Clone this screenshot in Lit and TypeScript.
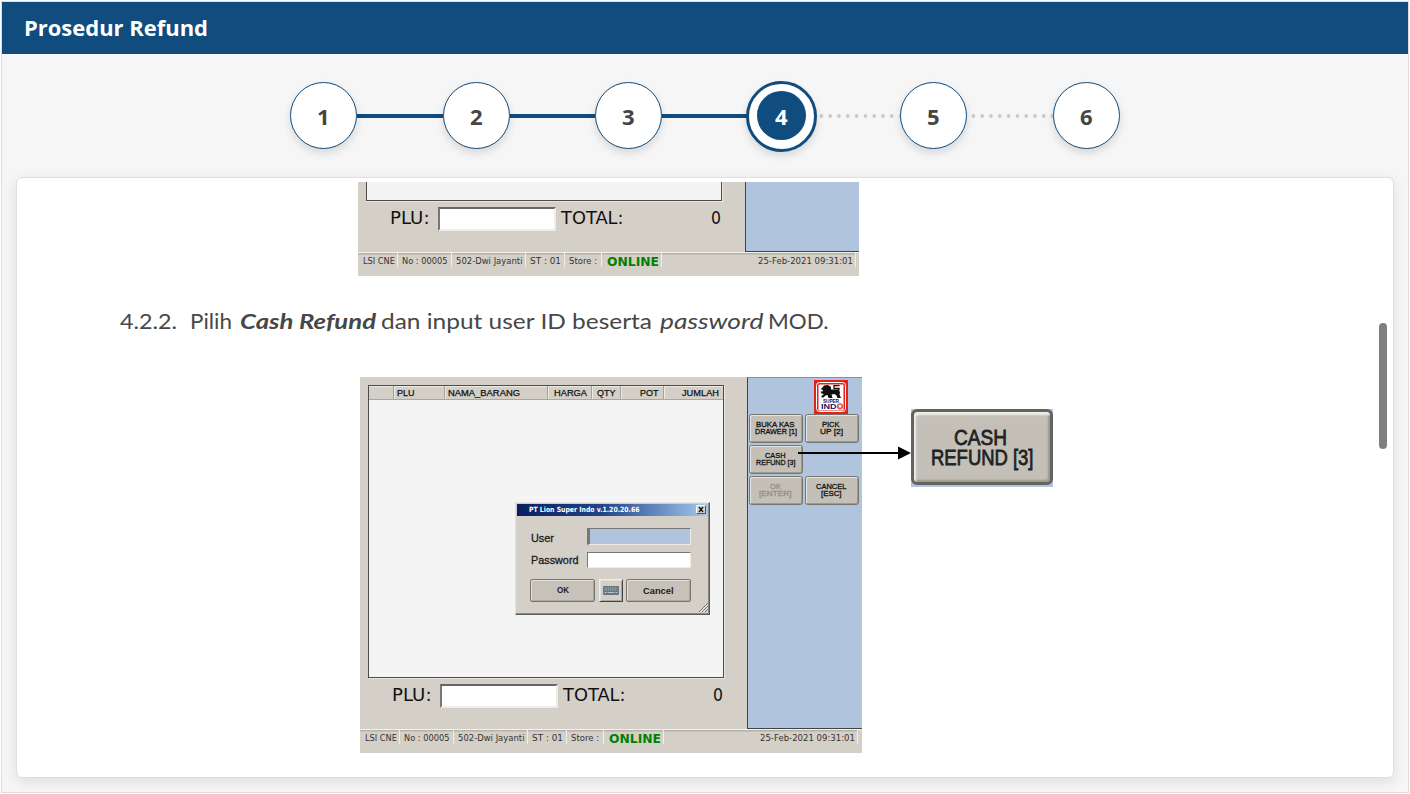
import { LitElement, html, css, svg, nothing } from "lit";
import { customElement, property } from "lit/decorators.js";
import { classMap } from "lit/directives/class-map.js";

/* A run of text set to an exact width; its box spans cap top to baseline. */
const fit = (text: string, width: number, size: number, cls = "") => {
  const cap = Math.round(size * 7.2) / 10;
  return html`<svg class="fit ${cls}" width=${width} height=${cap}>
    <text x="0" y=${cap} font-size=${size} textLength=${width} lengthAdjust="spacingAndGlyphs">${text}</text>
  </svg>`;
};

const fitStyles = css`
  .fit { display: block; flex: none; overflow: visible; fill: currentColor; }
`;

@customElement("step-track")
class StepTrack extends LitElement {
  @property({ type: Number }) current = 4;
  @property({ type: Number }) total = 6;

  static styles = [fitStyles, css`
    :host { display: flex; align-items: center; height: 124px; padding-left: 288.3px; box-sizing: border-box;
      font-family: "Open Sans", sans-serif; font-weight: 700; color: #454545; }
    .step { flex: none; box-sizing: border-box; width: 67px; height: 67px; border-radius: 50%; border: 1.4px solid #104c7e;
      background: #fff; display: flex; align-items: center; justify-content: center; padding: 2px 1px 0 0; margin-top: -1px;
      box-shadow: 0 4px 9px rgba(0,0,0,.13); z-index: 1; }
    .active { width: 71px; height: 71px; margin: 0 -2px; border: 3.500px solid #104c7e; padding: 0 0 2px; }
    .disc { width: 49px; height: 49px; border-radius: 50%; background: #104c7e; color: #fff;
      display: flex; align-items: center; justify-content: center; padding-top: 3px; box-sizing: border-box; }
    .line { width: 85.5px; height: 4px; background: #104c7e; flex: none; }
    .dots { background: radial-gradient(circle, #c8c8c8 1.6px, transparent 2.1px) 2px 0 / 8.8px 4px; }
  `];

  render() {
    return Array.from({ length: this.total }, (_, i) => i + 1).map((n) => {
      const label = fit(String(n), 12.6, 21.5);
      return html`${n > 1 ? html`<div class=${classMap({ line: true, dots: n > this.current })}></div>` : nothing}
        <div class=${classMap({ step: true, active: n === this.current })}>
          ${n === this.current ? html`<div class="disc">${label}</div>` : label}
        </div>`;
    });
  }
}

@customElement("login-dialog")
class LoginDialog extends LitElement {
  static styles = [fitStyles, css`
    :host { display: flex; flex-direction: column; box-sizing: border-box; width: 195px; height: 113.5px; background: #d4d0c8;
      border: 1px solid; border-color: #e8e6e0 #5c5c5c #5c5c5c #e4e2dc; padding: 1px;
      font-family: "Liberation Sans", sans-serif; color: #1c1c1c; box-shadow: inset -1px -1px #8c8a84; }
    .bar { display: flex; align-items: center; justify-content: space-between; height: 12px; padding: 0 2.5px 0 12px;
      background: linear-gradient(90deg, #0a1f62, #21458c 45%, #a6caf0); color: #fff; font-family: "DejaVu Sans", sans-serif; font-weight: 700; }
    .close { width: 10px; height: 9px; background: #d4d0c8; border: 1px solid; border-color: #fff #555 #555 #fff; box-sizing: border-box; display: block; }
    .row { display: flex; align-items: center; justify-content: space-between; height: 16.5px; padding: 0 17.5px 0 14px; margin-top: 12.5px; }
    .row + .row { margin-top: 7px; }
    .row .fit { margin-top: 4px; stroke: currentColor; stroke-width: .3; }
    .row + .row .fit { margin-top: 0; }
    .field { width: 104px; height: 16.5px; box-sizing: border-box; background: #fff; border: 1.5px solid;
      border-color: #777 #eeece6 #eeece6 #777; }
    .focus { background: #b0c4de; border-left-width: 3px; }
    .actions { display: flex; gap: 4px; padding: 0 0 0 13px; margin-top: 11px; font-weight: 700; }
    .btn { width: 65px; height: 23px; box-sizing: border-box; border: 1px solid #77756f; border-radius: 2px; background: #c6c2b9;
      box-shadow: inset 1px 1px #e2dfd8, inset -1px -1px #aaa79e; display: flex; align-items: center; justify-content: center; }
    .key { width: 24px; border-radius: 0; background: #d4d0c8; border-color: #eee #444 #444 #eee; margin-right: -1px; }
    .grip { position: absolute; right: 1px; bottom: 2px; }
  `];

  render() {
    return html`
      <div class="bar">${fit("PT Lion Super Indo v.1.20.20.66", 110.5, 7.2)}
        <svg class="close" viewBox="0 0 8 7"><path d="M2 1l4 5M6 1L2 6" stroke="#111" stroke-width="1.3" /></svg></div>
      <div class="row">${fit("User", 23, 11)}<div class="field focus"></div></div>
      <div class="row">${fit("Password", 47.5, 11)}<div class="field"></div></div>
      <div class="actions">
        <div class="btn">${fit("OK", 12, 8.5)}</div>
        <div class="btn key"><svg width="16" height="9" viewBox="0 0 16 9">
          <rect width="16" height="9" rx="1" fill="#66757f" />
          <path d="M1.5 2h13M1.5 4h13" stroke="#b6c2c9" stroke-dasharray="1 .8" /><path d="M1.5 6.5h2M4.5 6.5h7M12.5 6.5h2" stroke="#b6c2c9" />
        </svg></div>
        <div class="btn">${fit("Cancel", 30.5, 9)}</div>
      </div>
      <svg class="grip" width="9" height="9"><path d="M0 9L9 0M3 9l6-6M6 9l3-3" stroke="#77756f" /><path d="M1 9.5l8-8M4 9.5l5-5" stroke="#fff" stroke-width=".6" /></svg>`;
  }
}

type Key = { lines: [string, number][]; off?: boolean } | null;
const keys: Key[] = [
  { lines: [["BUKA KAS", 38.5], ["DRAWER [1]", 42]] },
  { lines: [["PICK", 17.5], ["UP [2]", 23]] },
  { lines: [["CASH", 20.5], ["REFUND [3]", 39.5]] },
  null,
  { lines: [["OK", 11], ["[ENTER]", 32.5]], off: true },
  { lines: [["CANCEL", 30.5], ["[ESC]", 20.5]] },
];

const columns: [string, number, number, string][] = [
  ["", 24.5, 0, "l"], ["PLU", 51, 17.5, "l"], ["NAMA_BARANG", 103.5, 72, "l"], ["HARGA", 44, 33, "r"],
  ["QTY", 29, 18.5, "r"], ["POT", 43, 18.5, "r"], ["JUMLAH", 59, 37, "r"],
];

const status: [string, number, number][] = [
  ["LSI CNE", 39.5, 32], ["No : 00005", 54, 45.5], ["502-Dwi Jayanti", 74, 66.5],
  ["ST : 01", 39, 31], ["Store :", 37, 28],
];

@customElement("pos-screen")
class PosScreen extends LitElement {
  @property({ type: Boolean }) login = false;
  /* Shows only the lower end of the screen, below the scrolled-away part. */
  @property({ type: Boolean, reflect: true }) tail = false;

  static styles = [fitStyles, css`
    :host { position: relative; display: grid; grid-template: 352px 24px / 387px 1fr; width: 502px; flex: none; background: #d4d0c8;
      font-family: "DejaVu Sans", "Liberation Sans", sans-serif; color: #111; overflow: hidden; }
    :host([tail]) { grid-template-rows: 70px 24px; width: 501px; }
    .main { padding: 8px 23px 0 8px; display: flex; flex-direction: column; }
    .table { height: 293px; box-sizing: border-box; border: 1px solid #4c4c4c; background: #f4f4f4; box-shadow: 1px 1px #e8e6e0; }
    :host([tail]) .main { padding-top: 0; }
    :host([tail]) .table { height: 19px; border-top: 0; }
    :host([tail]) .side { border-top: 0; }
    .head { display: flex; height: 13.5px; background: #d4d0c8; border-bottom: 1px solid #aaa79f; box-sizing: border-box;
      font-family: "Liberation Sans", sans-serif; box-shadow: inset 0 1px #eceae4; }
    .th { display: flex; align-items: center; box-sizing: border-box; border-right: 1px solid #a5a29a; padding: 2px 4.500px 0 3px; box-shadow: 1px 0 #eceae4; }
    .th:last-child { border: 0; box-shadow: none; }
    .th .fit { stroke: currentColor; stroke-width: .25; }
    .r { justify-content: flex-end; }
    .entry { display: flex; align-items: center; height: 24px; margin-top: 6px; padding-left: 24px; }
    .entry .fit { margin-top: -1.500px; }
    .code { width: 117.5px; height: 24px; box-sizing: border-box; background: #fff; border: 2px solid; border-color: #666 #efede7 #efede7 #777; margin: 0 5.500px 0 8.5px; }
    .entry .sum { margin-left: auto; margin-right: 1.500px; }
    .side { background: #b0c4de; border: solid #404448; border-width: 1px 0 1px 1px; border-top-color: #8790a0; padding: 2px 2px 0 1px; }
    .logo { display: block; margin-left: 65px; }
    .keys { display: grid; grid-template-columns: 54px 54px; gap: 2px 1.5px; margin-top: -.5px; }
    .key { height: 29px; box-sizing: border-box; border: 1px solid #77756f; border-radius: 2.5px; background: #c4c0b8;
      box-shadow: inset 1px 1px #e6e4de, inset -1px -1px #9c998f; display: flex; flex-direction: column; align-items: center;
      padding: 6px 1px 0 0; gap: 2px; font-family: "Liberation Sans", sans-serif; }
    .key .fit { stroke: currentColor; stroke-width: .3; }
    .off { color: #918e87; }
    .status { grid-column: 1 / 3; display: flex; align-items: flex-start; border-top: 1px solid #f4f3ee; color: #333; }
    .cell { box-sizing: border-box; height: 14px; border: solid #f0eee9; border-width: 0 1px 0 0; box-shadow: inset 0 1.5px #b4b1aa; padding: 5px 0 0 4.500px; }
    .online { width: 60.5px; color: #008000; font-weight: 700; padding: 4px 0 0 5px; }
    .clock { flex: none; width: 193.5px; display: flex; justify-content: flex-end; padding-right: 2px; }
    .dialog { position: absolute; left: 155px; top: 124.5px; }
  `];

  logo() {
    return html`<svg class="logo" width="34" height="34" viewBox="0 0 34 34">
      <rect width="34" height="34" fill="#df241d" />
      <rect x="2.5" y="2.5" width="29" height="29" rx="3" fill="#df241d" stroke="#fff" />
      <rect x="4.500" y="4.500" width="25" height="26" rx="1" fill="#fff" />
      ${svg`<path d="M9 7.500l2-2.500h4l2 2v2l7 .5" fill="none" />
      <path d="M8 8l2-2.500 4-.5 3 2v2.500h8l1 3-.5 2 1.500 3.500h-3.500l-1-2.500-2-1.500-3 .5 1 3.500h-4l-1-3-2 .5-2 2h-2v-1.500l2.500-2-2.500-.5-1-2h2l.5-1.500-2.500-1z" fill="#111" />
      <path d="M25 10V8.500h-5V5.700h5.500" fill="none" stroke="#111" stroke-width="1.300" />
      <circle cx="26" cy="26.300" r="2.300" fill="none" stroke="#e4554e" stroke-width="1.700" />
      <g font-family="Liberation Sans, sans-serif" font-weight="700" fill="#1b1464">
        <text x="9" y="22.800" font-size="4.800" textLength="16">SUPER</text>
        <text x="7" y="29" font-size="7.800" textLength="15.500" lengthAdjust="spacingAndGlyphs">IND</text>
      </g>`}
    </svg>`;
  }

  render() {
    return html`
      <div class="main">
        <div class="table">${this.tail ? nothing : html`<div class="head">
          ${columns.map(([t, w, tw, a]) => html`<div class="th ${a}" style="width:${w}px">${t ? fit(t, tw, 8.8) : nothing}</div>`)}
        </div>`}</div>
        <div class="entry">${fit("PLU:", 39.5, 16.8)}<div class="code"></div>${fit("TOTAL:", 62.5, 16.8)}${fit("0", 10, 16.8, "sum")}</div>
      </div>
      <div class="side">${this.tail ? nothing : html`${this.logo()}
        <div class="keys">${keys.map((k) => k
          ? html`<div class=${classMap({ key: true, off: !!k.off })}>${k.lines.map(([t, w]) => fit(t, w, 8))}</div>`
          : html`<span></span>`)}</div>`}
      </div>
      <div class="status">
        ${status.map(([t, w, tw]) => html`<div class="cell" style="width:${w}px">${fit(t, tw, 8.4)}</div>`)}
        <div class="cell online">${fit("ONLINE", 52, 12)}</div>
        <div class="cell clock">${fit("25-Feb-2021 09:31:01", 95, 8.4)}</div>
      </div>
      ${this.login ? html`<login-dialog class="dialog"></login-dialog>` : nothing}`;
  }
}

@customElement("app-root")
class AppRoot extends LitElement {
  static styles = [fitStyles, css`
    :host { display: block; height: 794px; padding: 1px; box-sizing: border-box; background: #fff; overflow: hidden; font-family: "Open Sans", sans-serif; }
    .frame { height: 792px; box-sizing: border-box; border: 1px solid #dedede; background: #f6f6f6; overflow: hidden; }
    .title { height: 52px; display: flex; align-items: center; padding: 0 0 0 21.500px; background: #104c7e; color: #fff; font-weight: 700; }
    .card { position: relative; box-sizing: border-box; margin: -1px 14px 0 14px; height: 601px; border: 1px solid #dedede; border-radius: 6px;
      background: #fff; padding-top: 4px; box-shadow: 0 4px 14px rgba(0,0,0,.1); }
    .previous { display: block; margin-left: 341px; }
    .sentence { display: flex; align-items: flex-end; height: 53px; padding-left: 103px; color: #474747; font-family: Lato, sans-serif; }
    .num { margin-right: 12.500px; }
    .strong { font-weight: 700; font-style: italic; margin: 0 4.500px 0 8.500px; }
    .em { font-style: italic; margin: 0 5px 0 8px; }
    .figure { display: flex; margin: 48px 0 0 343px; position: relative; }
    .callout { box-sizing: border-box; width: 142px; height: 78px; margin: 32px 0 0 49px; background: #b0c4de; color: #222; font-family: "Liberation Sans", sans-serif; }
    .big { box-sizing: border-box; width: 142px; height: 76px; border: 3px solid #65635e; border-radius: 6px; background: #c4c0b8;
      box-shadow: inset 2px 3px 2px #efede8, inset -2px -2px 2px #9b978e; display: flex; flex-direction: column; align-items: center;
      padding-top: 17px; gap: 4px; }
    .big .fit { stroke: currentColor; stroke-width: .8; }
    .big .fit:first-child { margin-left: -3px; }
    .arrow { position: absolute; left: 438px; top: 69px; }
    .thumb { position: absolute; right: 6px; top: 144.500px; width: 8px; height: 126px; border-radius: 4px; background: #808080; }
  `];

  render() {
    return html`<div class="frame">
      <div class="title">${fit("Prosedur Refund", 184, 22)}</div>
      <step-track .current=${4}></step-track>
      <div class="card">
        <div class="previous"><pos-screen tail></pos-screen></div>
        <div class="sentence">
          ${fit("4.2.2.", 57, 21.8, "num")}${fit("Pilih", 42, 21.8)}
          ${fit("Cash Refund", 136, 21.8, "strong")}${fit("dan input user ID beserta", 271, 21.8)}
          ${fit("password", 103.5, 21.8, "em")}${fit("MOD.", 60.5, 21.8)}
        </div>
        <div class="figure">
          <pos-screen login></pos-screen>
          <div class="callout"><div class="big">${fit("CASH", 53, 22)}${fit("REFUND [3]", 102.5, 22)}</div></div>
          <svg class="arrow" width="113" height="14"><path d="M0 7h102" stroke="#000" stroke-width="2" /><path d="M100 .5L113 7l-13 6.500z" /></svg>
        </div>
        <div class="thumb"></div>
      </div>
    </div>`;
  }
}
